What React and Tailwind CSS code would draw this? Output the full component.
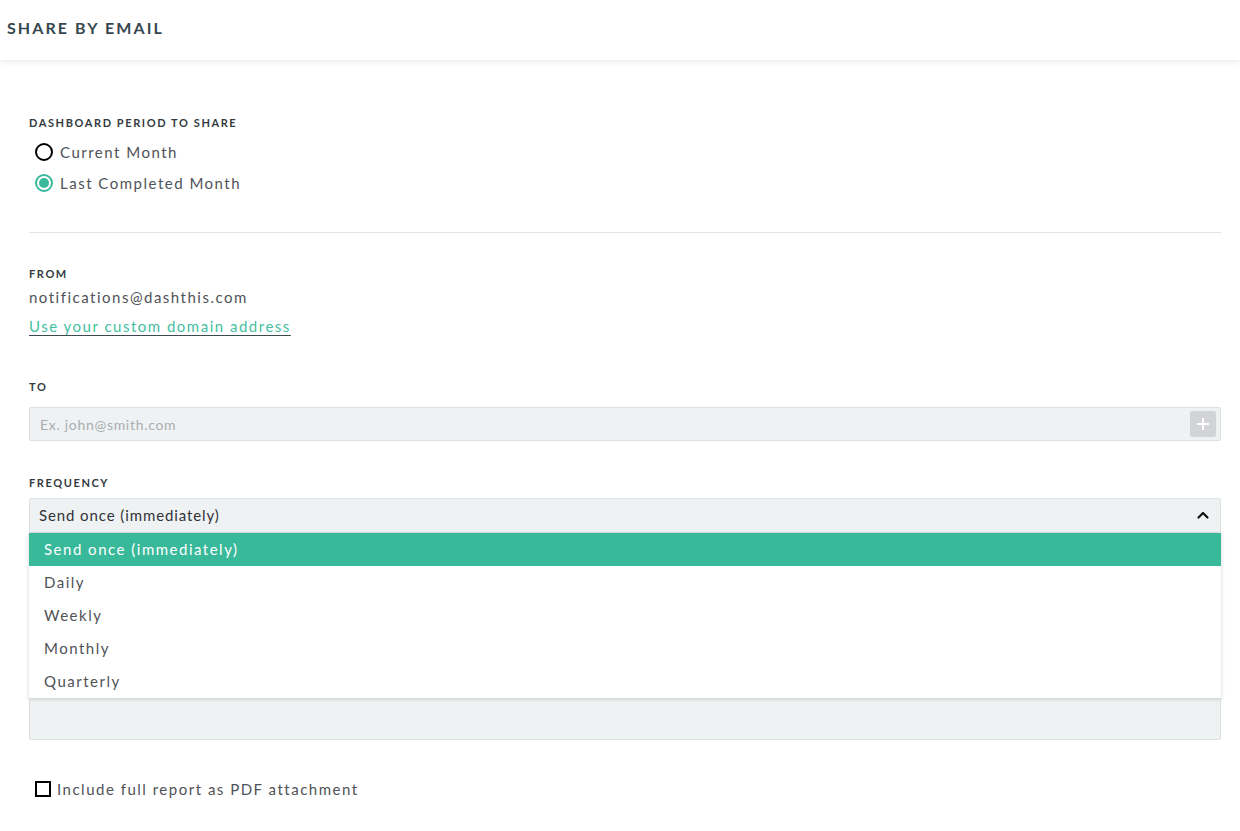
import { useState } from 'react'

const options = ['Send once (immediately)', 'Daily', 'Weekly', 'Monthly', 'Quarterly']

function Label({ children }) {
  return <p className="text-[11px] font-bold uppercase tracking-[0.145em] text-[#333a40]">{children}</p>
}

function Radio({ checked, label }) {
  return (
    <label className="flex items-center gap-[7px] h-[31px] pl-[6px]">
      {checked ? (
        <span className="flex h-[18px] w-[18px] items-center justify-center rounded-full border-2 border-[#38b99a]">
          <span className="h-[10px] w-[10px] rounded-full bg-[#38b99a]" />
        </span>
      ) : (
        <span className="h-[18px] w-[18px] rounded-full border-2 border-black" />
      )}
      <span className="text-[15px] tracking-[0.1em] text-[#4f5258]">{label}</span>
    </label>
  )
}

export default function App() {
  const [selected] = useState(0)

  return (
    <div className="min-h-[831px] bg-white text-[#4f5258]" style={{ fontFamily: 'Lato, "Open Sans", sans-serif' }}>
      {/* Header */}
      <header className="relative z-10 flex h-[60px] items-center bg-white px-[7px] pb-[4px] shadow-[0_2px_6px_rgba(0,0,0,0.08)]">
        <h1 className="text-[16px] font-bold uppercase tracking-[0.13em] text-[#37474f]">Share by email</h1>
      </header>

      <div className="px-[29px] pr-[19px] pt-[55px]">
        {/* Period */}
        <section>
          <Label>Dashboard period to share</Label>
          <div className="mt-[5px]">
            <Radio label="Current Month" />
            <Radio checked label="Last Completed Month" />
          </div>
        </section>

        <div className="mt-[33px] border-t border-[#e2e5e7]" />

        {/* From */}
        <section className="mt-[33px]">
          <Label>From</Label>
          <p className="mt-[4px] text-[15px] tracking-[0.1em] text-[#4f5258]">notifications@dashthis.com</p>
          <a href="#" className="mt-[6px] inline-block text-[15px] tracking-[0.1em] text-[#45bfa2] underline decoration-[#3a4a50] underline-offset-[3px]">
            Use your custom domain address
          </a>
        </section>

        {/* To */}
        <section className="mt-[41px]">
          <Label>To</Label>
          <div className="mt-[12px] flex h-[34px] items-center rounded-[2px] border border-[#dde1e3] bg-[#eff2f3] pl-[10px] pr-[4px]">
            <span className="flex-1 text-[14px] tracking-[0.05em] text-[#a9adb1]">Ex. john@smith.com</span>
            <span className="flex h-[26px] w-[26px] items-center justify-center rounded-[2px] bg-[#d3d4d8]">
              <svg width="14" height="14" viewBox="0 0 14 14" fill="none" stroke="white" strokeWidth="2">
                <path d="M7 1v12M1 7h12" />
              </svg>
            </span>
          </div>
        </section>

        {/* Frequency */}
        <section className="mt-[34px]">
          <Label>Frequency</Label>
          <div className="relative mt-[6px]">
            <div className="flex h-[35px] items-center rounded-[2px] border border-[#dde1e3] bg-[#eff2f3] pl-[9px] pr-[10px]">
              <span className="flex-1 text-[15px] tracking-[0.06em] text-[#2f3338]">Send once (immediately)</span>
              <svg width="14" height="14" viewBox="0 0 14 14" fill="none" stroke="#111" strokeWidth="2.2" strokeLinecap="round" strokeLinejoin="round">
                <path d="M2.5 9.5L7 5l4.5 4.5" />
              </svg>
            </div>

            {/* Options menu */}
            <ul className="absolute left-0 right-0 top-[35px] z-20 bg-white shadow-[0_1px_4px_rgba(0,0,0,0.18)]">
              {options.map((o, i) => (
                <li
                  key={o}
                  className={
                    i === selected
                      ? 'flex h-[33px] items-center bg-[#38b99a] pl-[15px] text-[15px] tracking-[0.1em] text-white'
                      : 'flex h-[33px] items-center pl-[15px] text-[15px] tracking-[0.1em] text-[#4f5258]'
                  }
                >
                  {o}
                </li>
              ))}
            </ul>
          </div>
        </section>

        {/* Field hidden under the menu */}
        <section className="mt-[40px]">
          <p className="invisible text-[11px]">Message</p>
          <div className="mt-[8px] h-[143px] rounded-[2px] border border-[#dde1e3] bg-[#eff2f3]" />
        </section>

        {/* PDF checkbox */}
        <label className="mt-[38px] flex items-center gap-[6px] pl-[6px]">
          <span className="h-[16px] w-[16px] border-2 border-black bg-white" />
          <span className="text-[15px] tracking-[0.1em] text-[#4f5258]">Include full report as PDF attachment</span>
        </label>
      </div>
    </div>
  )
}
